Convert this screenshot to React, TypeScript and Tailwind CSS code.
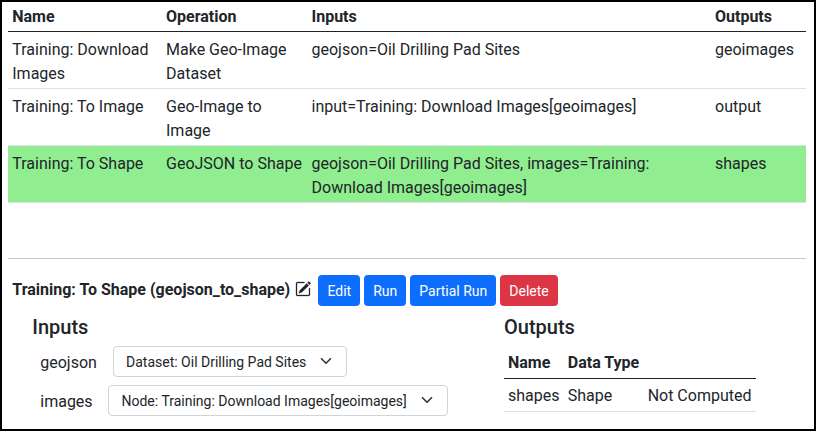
import type { ReactNode } from "react";
import { BsPencilSquare } from "react-icons/bs";

type WorkflowNode = {
  name: string;
  operation: string;
  inputs: string;
  outputs: string;
  selected?: boolean;
};

const nodes: WorkflowNode[] = [
  {
    name: "Training: Download Images",
    operation: "Make Geo-Image Dataset",
    inputs: "geojson=Oil Drilling Pad Sites",
    outputs: "geoimages",
  },
  {
    name: "Training: To Image",
    operation: "Geo-Image to Image",
    inputs: "input=Training: Download Images[geoimages]",
    outputs: "output",
  },
  {
    name: "Training: To Shape",
    operation: "GeoJSON to Shape",
    inputs: "geojson=Oil Drilling Pad Sites, images=Training: Download Images[geoimages]",
    outputs: "shapes",
    selected: true,
  },
];

function NodeTable() {
  return (
    <table className="w-full table-fixed border-separate border-spacing-0 text-left">
      <colgroup>
        <col className="w-[154px]" />
        <col className="w-[145.5px]" />
        <col className="w-[403.5px]" />
        <col />
      </colgroup>
      <thead>
        <tr>
          {["Name", "Operation", "Inputs", "Outputs"].map((title) => (
            <th key={title} className="border-b border-[#212529] px-1 pt-[3px] pb-0.5 font-bold first:pl-[4.25px]">
              {title}
            </th>
          ))}
        </tr>
      </thead>
      <tbody>
        {nodes.map((node) => (
          <tr key={node.name} className={node.selected ? "bg-[#90ee90]" : "bg-white"}>
            {[node.name, node.operation, node.inputs, node.outputs].map((text) => (
              <td key={text} className="border-b border-[#dee2e6] px-1 pt-1.5 pb-0.5 align-top first:pl-[4.25px]">
                {text}
              </td>
            ))}
          </tr>
        ))}
      </tbody>
    </table>
  );
}

function Button({ danger, children }: { danger?: boolean; children: ReactNode }) {
  return (
    <button
      className={`h-[31px] rounded-[4px] px-[9px] pt-0.5 text-sm leading-[21px] whitespace-nowrap text-white ${
        danger ? "bg-[#dc3545]" : "bg-[#0d6efd]"
      }`}
    >
      {children}
    </button>
  );
}

function Select({ className, children }: { className: string; children: ReactNode }) {
  return (
    <button
      className={`flex h-[31px] items-center justify-between rounded-[4px] border border-[#ced4da] bg-white pr-3 text-sm leading-[21px] whitespace-nowrap ${className}`}
    >
      <span className="pt-0.5">{children}</span>
      <svg viewBox="0 0 16 16" className="mb-px h-3 w-4" fill="none" stroke="#343a40" strokeWidth="2.3">
        <path strokeLinecap="round" strokeLinejoin="round" d="m2 5 6 6 6-6" />
      </svg>
    </button>
  );
}

export default function App() {
  return (
    <div className="h-[431px] w-[816px] overflow-hidden border-2 border-black bg-white pr-2 pl-1.5 font-[Roboto,sans-serif] text-base leading-6 text-[#212529]">
      <NodeTable />
      <hr className="mt-[55px] border-t border-[#c8c9ca]" />
      <div className="mt-4 flex h-[31px] items-center pl-[4.25px]">
        <span className="pb-0.5 font-bold whitespace-nowrap">Training: To Shape (geojson_to_shape)</span>
        <BsPencilSquare className="mb-[3px] ml-[5px] h-4 w-4" strokeWidth={0.3} />
        <div className="ml-[7.25px] flex gap-1">
          <Button>Edit</Button>
          <Button>Run</Button>
          <Button>Partial Run</Button>
          <Button danger>Delete</Button>
        </div>
      </div>
      <div className="mt-2 flex pl-6">
        <section className="w-[472px]">
          <h5 className="pt-px pl-[0.25px] text-xl leading-6 font-medium">Inputs</h5>
          <div className="mt-[7px] flex items-center pl-2">
            <span className="w-[73px] pt-0.5 pl-[0.25px]">geojson</span>
            <Select className="w-[234px] pl-3">Dataset: Oil Drilling Pad Sites</Select>
          </div>
          <div className="mt-2 flex items-center pl-2">
            <span className="w-[68px] pt-0.5 pl-[0.25px]">images</span>
            <Select className="w-[340px] pl-[12.5px]">Node: Training: Download Images[geoimages]</Select>
          </div>
        </section>
        <section>
          <h5 className="pt-px text-xl leading-6 font-medium">Outputs</h5>
          <table className="mt-[7px] w-[252px] border-separate border-spacing-0 text-left">
            <thead>
              <tr>
                {["Name", "Data Type", ""].map((title) => (
                  <th key={title} className="border-b border-[#212529] px-1 pt-[5px] pb-[3px] font-bold whitespace-nowrap">
                    {title}
                  </th>
                ))}
              </tr>
            </thead>
            <tbody>
              <tr>
                {["shapes", "Shape", "Not Computed"].map((text) => (
                  <td key={text} className="border-b border-[#dee2e6] px-1 pt-[5px] pb-[3px] whitespace-nowrap">
                    {text}
                  </td>
                ))}
              </tr>
            </tbody>
          </table>
        </section>
      </div>
    </div>
  );
}
